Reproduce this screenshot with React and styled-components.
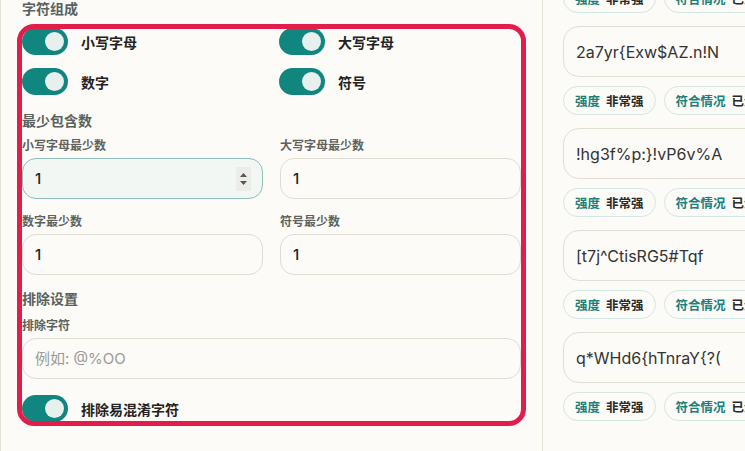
import React from 'react';
import styled, { createGlobalStyle } from 'styled-components';

const GlobalStyle = createGlobalStyle`
  html, body {
    margin: 0;
    padding: 0;
    background: #fcfbf7;
    overflow: hidden;
  }
  body {
    font-family: "Inter", "Noto Sans CJK SC", sans-serif;
  }
`;

const passwords = [
  '2a7yr{Exw$AZ.n!N',
  '!hg3f%p:}!vP6v%A',
  '[t7j^CtisRG5#Tqf',
  'q*WHd6{hTnraY{?(',
];

function Toggle({ label }) {
  return (
    <ToggleRow>
      <Track>
        <Knob />
      </Track>
      <ToggleLabel>{label}</ToggleLabel>
    </ToggleRow>
  );
}

function NumberField({ label, value, focused }) {
  return (
    <FieldGroup>
      <FieldLabel>{label}</FieldLabel>
      <Field $focused={focused}>
        <FieldInput type="text" defaultValue={value} readOnly />
        {focused && (
          <Spinner>
            <svg width="9" height="18" viewBox="0 0 9 18">
              <path d="M4.5 3 L8 7 L1 7 Z" fill="#555" />
              <path d="M1 11 L8 11 L4.5 15 Z" fill="#555" />
            </svg>
          </Spinner>
        )}
      </Field>
    </FieldGroup>
  );
}

function Tag({ name, value }) {
  return (
    <Pill>
      <PillName>{name}</PillName>
      <PillValue>{value}</PillValue>
    </Pill>
  );
}

function TagRow() {
  return (
    <Tags>
      <Tag name="强度" value="非常强" />
      <Tag name="符合情况" value="已满足全部要求" />
    </Tags>
  );
}

export default function App() {
  return (
    <Page>
      <GlobalStyle />
      <LeftPanel>
        <SectionTitle>字符组成</SectionTitle>
        <Highlight>
          <ToggleGrid>
            <Toggle label="小写字母" />
            <Toggle label="大写字母" />
            <Toggle label="数字" />
            <Toggle label="符号" />
          </ToggleGrid>

          <SectionTitle $top={17}>最少包含数</SectionTitle>
          <FieldGrid>
            <NumberField label="小写字母最少数" value="1" focused />
            <NumberField label="大写字母最少数" value="1" />
            <NumberField label="数字最少数" value="1" />
            <NumberField label="符号最少数" value="1" />
          </FieldGrid>

          <SectionTitle $top={15}>排除设置</SectionTitle>
          <FieldGroup $top={10}>
            <FieldLabel>排除字符</FieldLabel>
            <Field>
              <FieldInput type="text" placeholder="例如: @%OO" readOnly />
            </Field>
          </FieldGroup>

          <BottomToggle>
            <Toggle label="排除易混淆字符" />
          </BottomToggle>
        </Highlight>
      </LeftPanel>

      <RightPanel>
        <TagRow />
        {passwords.map((pw) => (
          <Result key={pw}>
            <PasswordCard>{pw}</PasswordCard>
            <TagRow />
          </Result>
        ))}
      </RightPanel>
    </Page>
  );
}

const Page = styled.div`
  display: flex;
  height: 100vh;
  width: 100vw;
  overflow: hidden;
`;

const LeftPanel = styled.div`
  box-sizing: border-box;
  flex: 0 0 543px;
  width: 543px;
  min-width: 0;
  padding: 0 21px;
  border-left: 1px solid #e4e1d7;
  border-right: 1px solid #e4e1d7;
  display: flex;
  flex-direction: column;
`;

const SectionTitle = styled.div`
  margin-top: ${({ $top }) => $top || 0}px;
  font-size: 14px;
  line-height: 18px;
  font-weight: 700;
  color: #58615e;
`;

const Highlight = styled.div`
  position: relative;
  margin-top: 10px;
  display: flex;
  flex-direction: column;

  &::after {
    content: '';
    position: absolute;
    top: -4px;
    left: -5px;
    right: -5px;
    bottom: -4px;
    border: 5px solid #e31d4b;
    border-radius: 17px;
    pointer-events: none;
  }
`;

const ToggleGrid = styled.div`
  display: grid;
  grid-template-columns: minmax(0, 1fr) minmax(0, 1fr);
  column-gap: 15px;
  row-gap: 13px;
`;

const ToggleRow = styled.div`
  display: flex;
  align-items: center;
  gap: 13px;
`;

const Track = styled.div`
  box-sizing: border-box;
  width: 46px;
  height: 27px;
  border-radius: 14px;
  background: #11867f;
  display: flex;
  align-items: center;
  justify-content: flex-end;
  padding-right: 4px;
`;

const Knob = styled.div`
  width: 19px;
  height: 19px;
  border-radius: 50%;
  background: #e6f0ed;
`;

const ToggleLabel = styled.span`
  font-size: 14px;
  font-weight: 700;
  color: #222;
`;

const FieldGrid = styled.div`
  margin-top: 8px;
  display: grid;
  grid-template-columns: minmax(0, 1fr) minmax(0, 1fr);
  column-gap: 17px;
  row-gap: 15px;
`;

const FieldGroup = styled.div`
  margin-top: ${({ $top }) => $top || 0}px;
  display: flex;
  flex-direction: column;
  gap: 4px;
`;

const FieldLabel = styled.label`
  font-size: 12px;
  line-height: 16px;
  font-weight: 700;
  color: #5c625f;
`;

const Field = styled.div`
  box-sizing: border-box;
  height: 41px;
  border-radius: 14px;
  border: 1px solid ${({ $focused }) => ($focused ? '#8fbdb7' : '#dfdcd2')};
  background: ${({ $focused }) => ($focused ? '#f2f7f4' : '#fcfbf7')};
  display: flex;
  align-items: center;
  padding: 0 11px 0 12px;
`;

const FieldInput = styled.input`
  flex: 1;
  width: 0;
  min-width: 0;
  border: none;
  outline: none;
  background: transparent;
  font-family: "Inter", "Noto Sans CJK SC", sans-serif;
  font-size: 15px;
  font-weight: 500;
  color: #222;
  padding: 0;

  &::placeholder {
    color: #9a9a96;
    font-weight: 400;
  }
`;

const Spinner = styled.div`
  width: 15px;
  height: 24px;
  background: #ecece9;
  display: flex;
  align-items: center;
  justify-content: center;
`;

const BottomToggle = styled.div`
  margin-top: 16px;
`;

const RightPanel = styled.div`
  flex: 0 0 420px;
  box-sizing: border-box;
  padding-left: 20px;
  margin-top: -16px;
  display: flex;
  flex-direction: column;
`;

const Result = styled.div`
  margin-top: 13px;
  display: flex;
  flex-direction: column;
  gap: 9px;
`;

const PasswordCard = styled.div`
  box-sizing: border-box;
  height: 51px;
  border: 1px solid #e1ded4;
  border-radius: 16px;
  display: flex;
  align-items: center;
  padding-left: 12px;
  font-size: 16px;
  color: #333;
`;

const Tags = styled.div`
  display: flex;
  gap: 8px;
`;

const Pill = styled.div`
  box-sizing: border-box;
  height: 29px;
  border: 1px solid #d2e6e3;
  border-radius: 15px;
  display: flex;
  align-items: center;
  gap: 6px;
  padding: 0 11px;
  font-size: 12.5px;
  font-weight: 700;
  white-space: nowrap;
`;

const PillName = styled.span`
  color: #1b7f7a;
`;

const PillValue = styled.span`
  color: #2a2a2a;
`;
